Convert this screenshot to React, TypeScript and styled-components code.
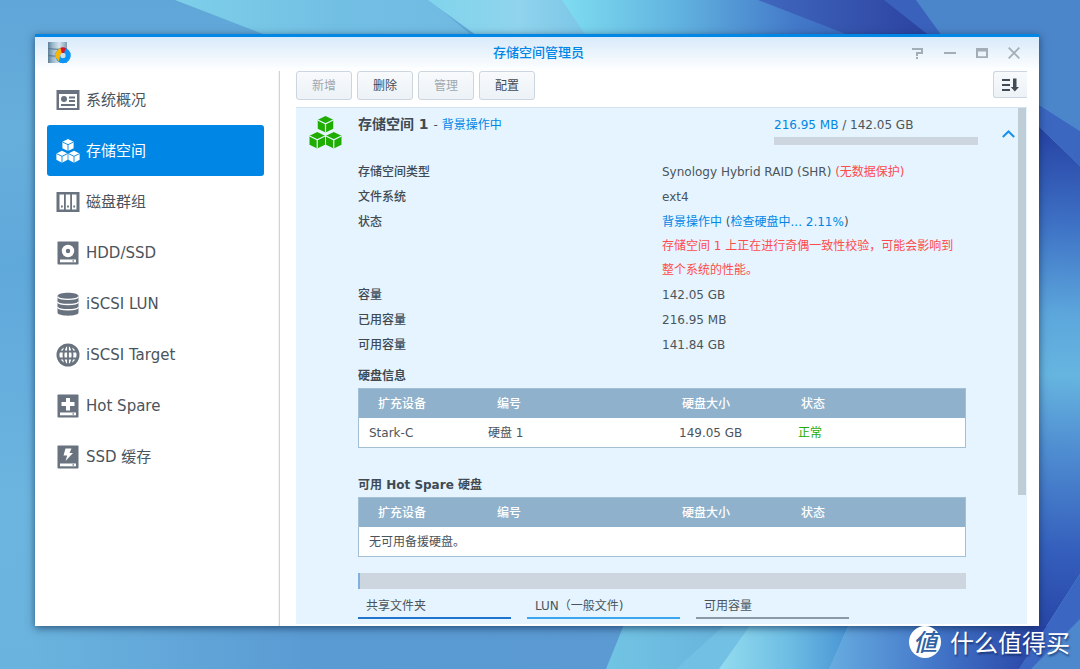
import React from "react";
import styled, { createGlobalStyle, css } from "styled-components";

const colors = {
  text: "#4b545c",
  heading: "#3f4a54",
  icon: "#69737f",
  blue: "#0086e5",
  red: "#ff4b4b",
  green: "#1fad00",
  panel: "#e5f4fe",
  bar: "#cdd6df",
  tableHead: "#8fb1cb",
};

const GlobalStyle = createGlobalStyle`
  *, *::before, *::after { box-sizing: border-box; }
  body {
    margin: 0;
    font-family: "DejaVu Sans", "Noto Sans CJK SC", sans-serif;
    font-size: 12px;
    color: ${colors.text};
  }
  button {
    font: inherit;
    color: inherit;
    padding: 0;
    border: 0;
    background: none;
  }
  svg { display: block; flex: none; }
`;

/* ---------- desktop and window frame ---------- */

const Desktop = styled.div`
  position: relative;
  display: flex;
  height: 100vh;
  padding: 34px 41px 43px 35px;
  background: #5fa5d8;
  overflow: hidden;
`;

const WallpaperSvg = styled.svg`
  position: absolute;
  inset: 0;
  width: 100%;
  height: 100%;
`;

const Window = styled.main`
  position: relative;
  flex: 1;
  min-width: 0;
  display: flex;
  flex-direction: column;
  background: #fff;
  border-top: 3px solid ${colors.blue};
  box-shadow: 0 2px 8px rgba(10, 35, 70, 0.65);
`;

const TitleBar = styled.header`
  flex: none;
  display: grid;
  grid-template-columns: 1fr auto 1fr;
  align-items: center;
  height: 34px;
  padding: 0 9px 2px 12px;
  background: linear-gradient(#d8eafa, #fff);
`;

const WindowTitle = styled.h1`
  margin: 0;
  font-size: 13px;
  line-height: 20px;
  font-weight: 500;
  color: ${colors.blue};
`;

const WindowControls = styled.div`
  display: flex;
  justify-content: flex-end;
`;

const ControlButton = styled.button`
  display: flex;
  align-items: center;
  justify-content: center;
  width: 32px;
  height: 24px;
  color: #a3adb5;
`;

const WindowBody = styled.div`
  flex: 1;
  min-height: 0;
  display: flex;
`;

/* ---------- sidebar ---------- */

const Sidebar = styled.nav`
  flex: none;
  width: 245px;
  padding: 3px 15px 0 12px;
  border-right: 1px solid #d4d4d4;
  box-shadow: inset -1px 0 0 #f3f3f3;
`;

const NavItem = styled.button<{ $active?: boolean }>`
  display: flex;
  align-items: center;
  gap: 6px;
  width: 100%;
  height: 51px;
  padding-left: 9px;
  border-radius: 3px;
  font-size: 15px;
  line-height: 20px;
  text-align: left;
  color: ${colors.text};
  svg { color: ${colors.icon}; }
  ${(p) =>
    p.$active &&
    css`
      background: ${colors.blue};
      color: #fff;
      svg { color: #fff; }
    `}
`;

/* ---------- main column ---------- */

const Main = styled.section`
  flex: 1;
  min-width: 0;
  display: flex;
  flex-direction: column;
  padding: 0 12px 2px 16px;
`;

const Toolbar = styled.div`
  flex: none;
  display: flex;
  gap: 5px;
  height: 36px;
`;

const ToolButton = styled.button`
  width: 56px;
  height: 29px;
  border: 1px solid #cbd6e0;
  border-radius: 3px;
  background: linear-gradient(#f8fafc, #ecf2f7);
  line-height: 20px;
  color: #414b55;
  &:disabled { color: #a0a8b0; }
`;

const SortButton = styled(ToolButton)`
  display: flex;
  align-items: center;
  justify-content: center;
  width: 34px;
  height: 27px;
  margin-left: auto;
  border-right: 0;
  border-radius: 3px 0 0 3px;
`;

const ScrollFrame = styled.div`
  flex: 1;
  min-height: 0;
  display: flex;
  background: ${colors.panel};
  border-top: 1px solid #d3e2ec;
`;

const ScrollContent = styled.div`
  flex: 1;
  min-width: 0;
  overflow: hidden;
`;

const ScrollTrack = styled.div`
  flex: none;
  width: 9px;
  padding-right: 1px;
`;

const ScrollThumb = styled.div`
  height: 75%;
  background: #bfcdd6;
`;

/* ---------- volume ---------- */

const VolumeHeader = styled.header`
  display: flex;
  align-items: flex-start;
  height: 52px;
  padding: 8px 3px 0 13px;
`;

const VolumeTitle = styled.h2`
  flex: 1;
  margin: 0 0 0 16px;
  font-size: 14px;
  line-height: 16px;
  font-weight: 700;
  color: ${colors.heading};
`;

const VolumeState = styled.span`
  font-size: 12px;
  font-weight: 400;
  color: ${colors.text};
`;

const Accent = styled.span<{ $tone: "blue" | "red" | "green" }>`
  color: ${(p) => colors[p.$tone]};
`;

const Usage = styled.div`
  width: 204px;
  line-height: 18px;
`;

const UsageBar = styled.div`
  height: 8px;
  margin-top: 3px;
  background: ${colors.bar};
`;

const CollapseButton = styled.button`
  margin: 10px 0 0 24px;
  padding: 4px 0;
  color: #1a90ea;
`;

const VolumeBody = styled.div`
  padding: 0 52px 0 62px;
`;

const Details = styled.dl`
  display: grid;
  grid-template-columns: 1fr 1fr;
  row-gap: 1px;
  margin: 0;
  line-height: 24px;
`;

const DetailName = styled.dt`
  font-weight: 500;
  color: ${colors.heading};
`;

const DetailValue = styled.dd`
  margin: 0;
`;

const Warning = styled.p`
  margin: 0;
  padding-right: 4px;
  color: ${colors.red};
`;

const DiskSection = styled.section`
  margin-top: 7px;
  & + & { margin-top: 25px; }
`;

const SectionTitle = styled.h3`
  margin: 0;
  font-size: 12px;
  line-height: 24px;
  font-weight: 700;
  color: ${colors.heading};
`;

const DiskTable = styled.table`
  width: 100%;
  table-layout: fixed;
  border-collapse: separate;
  border-spacing: 0;
  border: 1px solid #a3bfd3;
  background: #fff;
  line-height: 18px;
`;

const HeadCell = styled.th<{ $width?: number; $wide?: boolean }>`
  width: ${(p) => (p.$width ? `${p.$width}px` : "auto")};
  height: 29px;
  padding: 0 0 0 ${(p) => (p.$wide ? 19 : 13)}px;
  background: ${colors.tableHead};
  color: #fff;
  font-weight: 500;
  text-align: left;
`;

const Cell = styled.td`
  height: 29px;
  padding: 0 0 0 10px;
`;

const CapacityBar = styled.div`
  height: 16px;
  margin-top: 16px;
  background: ${colors.bar};
  border-left: 2px solid #7fb0e0;
`;

const Legend = styled.ul`
  display: flex;
  gap: 16px;
  margin: 8px 0 0;
  padding: 0;
  list-style: none;
`;

const LegendItem = styled.li<{ $line: string }>`
  width: 153px;
  padding: 0 8px 2px;
  line-height: 18px;
  border-bottom: 2px solid ${(p) => p.$line};
`;

/* ---------- site mark ---------- */

const SiteMark = styled.div`
  position: absolute;
  right: 10px;
  bottom: 11px;
  display: flex;
  align-items: center;
  gap: 9px;
  font-family: "Noto Sans CJK SC", sans-serif;
  font-size: 24px;
  line-height: 32px;
  color: #fff;
  text-shadow: 1px 2px 2px rgba(10, 30, 80, 0.6);
`;

const SiteBadge = styled.span`
  width: 32px;
  height: 32px;
  border-radius: 50%;
  background: #fff;
  color: #2f63a5;
  font-size: 24px;
  font-style: italic;
  font-weight: 500;
  line-height: 30px;
  text-align: center;
  text-shadow: none;
`;

/* ---------- drawings ---------- */

function Wallpaper() {
  return (
    <WallpaperSvg viewBox="0 0 1080 669" preserveAspectRatio="none" aria-hidden="true">
      <defs>
        <linearGradient id="wLeft" x1="0" y1="0" x2="0" y2="1">
          <stop offset="0" stopColor="#60a6d8" />
          <stop offset="0.2" stopColor="#66aedb" />
          <stop offset="0.4" stopColor="#5fa8da" />
          <stop offset="0.75" stopColor="#6cb5e0" />
          <stop offset="1" stopColor="#6ab3de" />
        </linearGradient>
        <linearGradient id="wBottom" x1="0" y1="0" x2="1" y2="0">
          <stop offset="0" stopColor="#6ab3de" />
          <stop offset="0.45" stopColor="#5a9bd3" />
          <stop offset="1" stopColor="#5b9ad2" />
        </linearGradient>
        <linearGradient id="wTopMid" x1="0" y1="0" x2="1" y2="0">
          <stop offset="0" stopColor="#7dcfe9" />
          <stop offset="0.5" stopColor="#72bfe4" />
          <stop offset="1" stopColor="#70b9e2" />
        </linearGradient>
        <linearGradient id="wTopLight" x1="0" y1="0" x2="1" y2="0">
          <stop offset="0" stopColor="#80d4ec" />
          <stop offset="0.5" stopColor="#90d4ed" />
          <stop offset="1" stopColor="#74c0e4" />
        </linearGradient>
        <linearGradient id="wTopFade" x1="0" y1="0" x2="1" y2="0">
          <stop offset="0" stopColor="#7edcf0" />
          <stop offset="0.3" stopColor="#62b4e0" />
          <stop offset="0.62" stopColor="#4379c9" />
          <stop offset="1" stopColor="#2e4fae" />
        </linearGradient>
        <linearGradient id="wTopDark" x1="0" y1="0" x2="1" y2="0">
          <stop offset="0" stopColor="#4067bd" />
          <stop offset="1" stopColor="#283d9c" />
        </linearGradient>
        <linearGradient id="wRight" gradientUnits="userSpaceOnUse" x1="1060" y1="130" x2="1050" y2="640">
          <stop offset="0" stopColor="#2743a5" />
          <stop offset="0.18" stopColor="#3d70c4" />
          <stop offset="0.36" stopColor="#5ca6dc" />
          <stop offset="0.48" stopColor="#66b5e0" />
          <stop offset="0.62" stopColor="#508fd2" />
          <stop offset="0.82" stopColor="#3560bd" />
          <stop offset="1" stopColor="#2743a5" />
        </linearGradient>
        <linearGradient id="wBotTeal" x1="0" y1="0" x2="1" y2="0">
          <stop offset="0" stopColor="#71c4e3" />
          <stop offset="1" stopColor="#66afdc" />
        </linearGradient>
        <linearGradient id="wBotLight" x1="0" y1="0" x2="1" y2="0">
          <stop offset="0" stopColor="#93dcef" />
          <stop offset="0.5" stopColor="#6dbde4" />
          <stop offset="1" stopColor="#438dd2" />
        </linearGradient>
        <linearGradient id="wBotDark" x1="0" y1="0" x2="1" y2="0">
          <stop offset="0" stopColor="#67ace0" />
          <stop offset="0.5" stopColor="#4275c8" />
          <stop offset="1" stopColor="#2740a3" />
        </linearGradient>
      </defs>
      <rect width="1080" height="669" fill="url(#wLeft)" />
      <path d="M35 600H640V669H35Z" fill="url(#wBottom)" />
      <path d="M175 0H430L500 60H330Z" fill="url(#wTopMid)" />
      <path d="M428 0H565L610 60H510Z" fill="url(#wTopLight)" />
      <path d="M562 0H900L940 60H602Z" fill="url(#wTopFade)" />
      <path d="M758 0H920L960 60H913Z" fill="url(#wTopDark)" />
      <path d="M884 0H920L980 60H960Z" fill="#3a62bd" />
      <path d="M916 0H1080V131L1035 102L955 54Z" fill="#4c86ca" />
      <path d="M1030 99L1080 131V166L1030 118Z" fill="#3c67c1" />
      <path d="M1030 118L1080 166V574L1019 669H960L1030 560Z" fill="url(#wRight)" />
      <path d="M634 600H760L676 669H606Z" fill="url(#wBotTeal)" />
      <path d="M752 600H770L719 669H676Z" fill="#72c0e3" />
      <path d="M768 600H860L829 669H719Z" fill="url(#wBotLight)" />
      <path d="M849 626H1047L1019 669H829Z" fill="url(#wBotDark)" />
      <path d="M1080 574V669H1019Z" fill="#3b67c2" />
      <path d="M1080 619V669H1031Z" fill="#4d87cc" />
    </WallpaperSvg>
  );
}

function Cubes({ size, line }: { size: number; line: string }) {
  return (
    <svg width={size} height={size} viewBox="0 0 32 32" aria-hidden="true">
      {[
        [16, 8],
        [8, 23.5],
        [24, 23.5],
      ].map(([x, y]) => (
        <g key={`${x}-${y}`} transform={`translate(${x} ${y})`}>
          <path d="M0-7.9 7.5-4.3V4.3L0 8.1-7.5 4.3V-4.3Z" fill="currentColor" />
          <path d="M-7.5-4.1 0-.4 7.5-4.1M0-.4V8" fill="none" stroke={line} strokeWidth="1.2" />
        </g>
      ))}
    </svg>
  );
}

function AppIcon() {
  return (
    <svg width="24" height="24" viewBox="0 0 24 24" aria-hidden="true">
      <defs>
        <linearGradient id="drum" x1="0" y1="0" x2="1" y2="0">
          <stop offset="0" stopColor="#5e7f98" />
          <stop offset="0.25" stopColor="#9db9cc" />
          <stop offset="0.6" stopColor="#d5e4ee" />
          <stop offset="1" stopColor="#7c9bb2" />
        </linearGradient>
      </defs>
      <path d="M1 1H20V22H1Z" fill="url(#drum)" />
      <path d="M1 7.5Q10 9 20 7.5M1 14.5Q10 16 20 14.5" fill="none" stroke="#58748a" strokeWidth="1.2" />
      <circle cx="16" cy="14.5" r="5.3" fill="none" stroke="#0c95f5" strokeWidth="5" />
      <path d="M12 20.5L8.2 16Q7.500 9.500 14 6.700L15 12Q13 13 13 15.500Z" fill="#f9b500" />
      <path d="M13.500 6.700Q16.500 5.800 19 7.200L17 12L14.800 12Z" fill="#d8142a" />
      <circle cx="16" cy="14.500" r="2.500" fill="#cfe0ea" />
    </svg>
  );
}

const OverviewIcon = () => (
  <svg width="24" height="24" viewBox="0 0 24 24" aria-hidden="true">
    <path d="M.5 2H23.5V22H.5ZM3 6V20H21V6Z" fill="currentColor" fillRule="evenodd" />
    <circle cx="8" cy="11" r="3" fill="currentColor" />
    <path d="M13 9.5H19M13 13H19M5 17H19" stroke="currentColor" strokeWidth="1.8" />
  </svg>
);

const GroupIcon = () => (
  <svg width="24" height="24" viewBox="0 0 24 24" aria-hidden="true">
    <path d="M.5 2H23.5V22H.5ZM3.500 4.500V19.500H8V4.500ZM9.800 4.500V19.500H14.200V4.500ZM16 4.500V19.500H20.500V4.500Z" fill="currentColor" fillRule="evenodd" />
    <path d="M5 15.500h1.800v2H5ZM11.100 15.500h1.800v2h-1.800ZM17.300 15.500h1.800v2h-1.800Z" fill="currentColor" />
  </svg>
);

function DriveIcon({ children }: { children: React.ReactNode }) {
  return (
    <svg width="24" height="24" viewBox="0 0 24 24" aria-hidden="true">
      <rect x="1.5" y="0.5" width="21" height="23" rx="0.8" fill="currentColor" />
      <rect x="4" y="18.5" width="16" height="2.8" fill="#fff" />
      <rect x="16.5" y="19.3" width="1.5" height="1.3" fill="currentColor" />
      {children}
    </svg>
  );
}

const HddIcon = () => (
  <DriveIcon>
    <circle cx="12" cy="10" r="4.2" fill="none" stroke="#fff" strokeWidth="4" />
  </DriveIcon>
);

const SpareIcon = () => (
  <DriveIcon>
    <path d="M10 4H14V8H18.5V12H14V16.5H10V12H5.5V8H10Z" fill="#fff" />
  </DriveIcon>
);

const CacheIcon = () => (
  <DriveIcon>
    <path d="M9.5 3.5H15.5L13.5 8H17L9.5 16L11.2 10.5H7.5Z" fill="#fff" />
  </DriveIcon>
);

const LunIcon = () => (
  <svg width="24" height="24" viewBox="0 0 24 24" aria-hidden="true">
    <path d="M1.5 4C1.5-.5 22.5-.5 22.5 4V20.5C22.5 24.7 1.5 24.7 1.5 20.5Z" fill="currentColor" />
    <path d="M1.5 4.8C3 8.2 21 8.2 22.5 4.8M1.5 10C3 13.4 21 13.4 22.5 10M1.5 15.2C3 18.6 21 18.6 22.5 15.2" fill="none" stroke="#fff" strokeWidth="1.4" />
  </svg>
);

const TargetIcon = () => (
  <svg width="24" height="24" viewBox="0 0 24 24" aria-hidden="true">
    <circle cx="12" cy="12" r="11.5" fill="currentColor" />
    <circle cx="12" cy="12" r="8.6" fill="#fff" />
    <path d="M3 8.5H21M3 15.5H21M12 3V21M9.5 3C6.8 8 6.8 16 9.5 21M14.5 3C17.2 8 17.2 16 14.5 21" fill="none" stroke="currentColor" strokeWidth="1.8" />
  </svg>
);

const navItems = [
  { label: "系统概况", icon: <OverviewIcon /> },
  { label: "存储空间", icon: <Cubes size={24} line={colors.blue} />, active: true },
  { label: "磁盘群组", icon: <GroupIcon /> },
  { label: "HDD/SSD", icon: <HddIcon /> },
  { label: "iSCSI LUN", icon: <LunIcon /> },
  { label: "iSCSI Target", icon: <TargetIcon /> },
  { label: "Hot Spare", icon: <SpareIcon /> },
  { label: "SSD 缓存", icon: <CacheIcon /> },
];

const toolButtons = [
  { label: "新增", disabled: true },
  { label: "删除" },
  { label: "管理", disabled: true },
  { label: "配置" },
];

const legend = [
  { label: "共享文件夹", line: "#1f74cc" },
  { label: "LUN（一般文件)", line: "#3ba6ee" },
  { label: "可用容量", line: "#8b98a5" },
];

function DiskTableHead() {
  return (
    <thead>
      <tr>
        <HeadCell $width={119} $wide>扩充设备</HeadCell>
        <HeadCell $width={191} $wide>编号</HeadCell>
        <HeadCell $width={119}>硬盘大小</HeadCell>
        <HeadCell>状态</HeadCell>
      </tr>
    </thead>
  );
}

export default function App() {
  return (
    <Desktop>
      <GlobalStyle />
      <Wallpaper />
      <Window>
        <TitleBar>
          <AppIcon />
          <WindowTitle>存储空间管理员</WindowTitle>
          <WindowControls>
            <ControlButton aria-label="帮助">
              <svg width="12" height="12" viewBox="0 0 12 12">
                <path d="M0 2H10V6H5V9" fill="none" stroke="currentColor" strokeWidth="2" />
                <path d="M4 10H6V12H4Z" fill="currentColor" />
              </svg>
            </ControlButton>
            <ControlButton aria-label="最小化">
              <svg width="12" height="12" viewBox="0 0 12 12">
                <path d="M0 6H12" stroke="currentColor" strokeWidth="2" />
              </svg>
            </ControlButton>
            <ControlButton aria-label="最大化">
              <svg width="12" height="12" viewBox="0 0 12 12">
                <path d="M0 1H12V11H0ZM2 4.5V9.3H10V4.5Z" fill="currentColor" fillRule="evenodd" />
              </svg>
            </ControlButton>
            <ControlButton aria-label="关闭">
              <svg width="12" height="12" viewBox="0 0 12 12">
                <path d="M.7.7 11.3 11.3M11.3.7.7 11.3" stroke="currentColor" strokeWidth="1.8" />
              </svg>
            </ControlButton>
          </WindowControls>
        </TitleBar>

        <WindowBody>
          <Sidebar>
            {navItems.map((item) => (
              <NavItem key={item.label} $active={item.active}>
                {item.icon}
                <span>{item.label}</span>
              </NavItem>
            ))}
          </Sidebar>

          <Main>
            <Toolbar>
              {toolButtons.map((b) => (
                <ToolButton key={b.label} disabled={b.disabled}>
                  {b.label}
                </ToolButton>
              ))}
              <SortButton aria-label="排序">
                <svg width="17" height="14" viewBox="0 0 17 14">
                  <path d="M0 2H8M0 7H8M0 12H8" stroke="currentColor" strokeWidth="2" />
                  <path d="M11 .5H14.5V9H17L12.8 13.5L8.8 9H11Z" fill="currentColor" />
                </svg>
              </SortButton>
            </Toolbar>

            <ScrollFrame>
              <ScrollContent>
                <VolumeHeader>
                  <Accent $tone="green">
                    <Cubes size={33} line={colors.panel} />
                  </Accent>
                  <VolumeTitle>
                    存储空间 1{" "}
                    <VolumeState>
                      - <Accent $tone="blue">背景操作中</Accent>
                    </VolumeState>
                  </VolumeTitle>
                  <Usage>
                    <Accent $tone="blue">216.95 MB</Accent> / 142.05 GB
                    <UsageBar />
                  </Usage>
                  <CollapseButton aria-label="收起">
                    <svg width="13" height="8" viewBox="0 0 13 8">
                      <path d="M.8 7 6.5 1.5 12.2 7" fill="none" stroke="currentColor" strokeWidth="2" />
                    </svg>
                  </CollapseButton>
                </VolumeHeader>

                <VolumeBody>
                  <Details>
                    <DetailName>存储空间类型</DetailName>
                    <DetailValue>
                      Synology Hybrid RAID (SHR) <Accent $tone="red">(无数据保护)</Accent>
                    </DetailValue>
                    <DetailName>文件系统</DetailName>
                    <DetailValue>ext4</DetailValue>
                    <DetailName>状态</DetailName>
                    <DetailValue>
                      <Accent $tone="blue">背景操作中</Accent> (<Accent $tone="blue">检查硬盘中... 2.11%</Accent>)
                      <Warning>存储空间 1 上正在进行奇偶一致性校验，可能会影响到整个系统的性能。</Warning>
                    </DetailValue>
                    <DetailName>容量</DetailName>
                    <DetailValue>142.05 GB</DetailValue>
                    <DetailName>已用容量</DetailName>
                    <DetailValue>216.95 MB</DetailValue>
                    <DetailName>可用容量</DetailName>
                    <DetailValue>141.84 GB</DetailValue>
                  </Details>

                  <DiskSection>
                    <SectionTitle>硬盘信息</SectionTitle>
                    <DiskTable>
                      <DiskTableHead />
                      <tbody>
                        <tr>
                          <Cell>Stark-C</Cell>
                          <Cell>硬盘 1</Cell>
                          <Cell>149.05 GB</Cell>
                          <Cell>
                            <Accent $tone="green">正常</Accent>
                          </Cell>
                        </tr>
                      </tbody>
                    </DiskTable>
                  </DiskSection>

                  <DiskSection>
                    <SectionTitle>可用 Hot Spare 硬盘</SectionTitle>
                    <DiskTable>
                      <DiskTableHead />
                      <tbody>
                        <tr>
                          <Cell colSpan={4}>无可用备援硬盘。</Cell>
                        </tr>
                      </tbody>
                    </DiskTable>
                  </DiskSection>

                  <CapacityBar />
                  <Legend>
                    {legend.map((l) => (
                      <LegendItem key={l.label} $line={l.line}>
                        {l.label}
                      </LegendItem>
                    ))}
                  </Legend>
                </VolumeBody>
              </ScrollContent>
              <ScrollTrack>
                <ScrollThumb />
              </ScrollTrack>
            </ScrollFrame>
          </Main>
        </WindowBody>
      </Window>

      <SiteMark>
        <SiteBadge>値</SiteBadge>
        <span>什么值得买</span>
      </SiteMark>
    </Desktop>
  );
}
